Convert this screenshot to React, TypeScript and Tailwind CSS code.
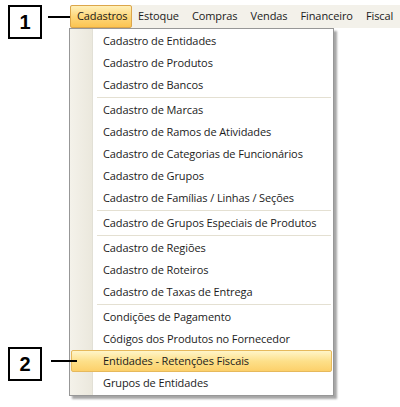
import type { ReactNode } from 'react';

type Entry = { label: string } | 'sep';

const MENU: Entry[] = [
  { label: 'Cadastro de Entidades' },
  { label: 'Cadastro de Produtos' },
  { label: 'Cadastro de Bancos' },
  'sep',
  { label: 'Cadastro de Marcas' },
  { label: 'Cadastro de Ramos de Atividades' },
  { label: 'Cadastro de Categorias de Funcionários' },
  { label: 'Cadastro de Grupos' },
  { label: 'Cadastro de Famílias / Linhas / Seções' },
  'sep',
  { label: 'Cadastro de Grupos Especiais de Produtos' },
  'sep',
  { label: 'Cadastro de Regiões' },
  { label: 'Cadastro de Roteiros' },
  { label: 'Cadastro de Taxas de Entrega' },
  'sep',
  { label: 'Condições de Pagamento' },
  { label: 'Códigos dos Produtos no Fornecedor' },
  { label: 'Entidades - Retenções Fiscais' },
  { label: 'Grupos de Entidades' },
];

const TOP = ['Cadastros', 'Estoque', 'Compras', 'Vendas', 'Financeiro', 'Fiscal'];

function Callout({ n, className, children }: { n: string; className: string; children?: ReactNode }) {
  return (
    <div className={`absolute flex items-center ${className}`}>
      <div className="w-[34px] h-[34px] border-2 border-black bg-white flex items-center justify-center text-[20px] font-bold text-black font-['Liberation_Sans',Arial,sans-serif]">
        {n}
      </div>
      {children}
    </div>
  );
}

export default function App() {
  return (
    <div className="relative w-[400px] h-[407px] bg-white overflow-hidden font-['Open_Sans','Noto_Sans',sans-serif] text-[11px] tracking-[-0.1px] whitespace-nowrap text-[#1b1b1b]">
      {/* menu bar */}
      <div className="ml-[70px] mt-[5px] h-[23px] bg-[#f3f1ea] flex items-stretch">
        {TOP.map((t, i) => (
          <div
            key={t}
            className={
              i === 0
                ? 'pl-[6px] pr-[3px] flex items-center border border-[#dca64a] rounded-[2px] bg-gradient-to-b from-[#fff0b8] via-[#fdd77a] to-[#fbc450]'
                : 'px-[6.5px] flex items-center'
            }
          >
            {t}
          </div>
        ))}
      </div>

      {/* dropdown */}
      <div className="absolute left-[69px] top-[28px] w-[265px] bg-white border border-[#979797] shadow-[3px_3px_2px_rgba(0,0,0,0.35)] py-[1px]">
        <div className="absolute left-0 top-0 bottom-0 w-[23px] bg-gradient-to-r from-[#f4f2ea] to-[#ebe8dd] border-r border-[#e2e0d6]" />
        <div className="absolute left-[24px] top-0 bottom-0 w-px bg-white" />
        <div className="relative flex flex-col">
          {MENU.map((e, i) =>
            e === 'sep' ? (
              <div key={i} className="h-[3px] flex items-center pl-[27px] pr-[2px]">
                <div className="h-px w-full bg-[#e4e0d2]" />
              </div>
            ) : e.label === 'Entidades - Retenções Fiscais' ? (
              <div
                key={i}
                className="h-[22px] mx-[1px] flex items-center pl-[31px] border border-[#e6b95c] rounded-[2px] bg-gradient-to-b from-[#fff5c8] via-[#fde08a] to-[#fcd06a]"
              >
                {e.label}
              </div>
            ) : (
              <div key={i} className="h-[22px] flex items-center pl-[33px]">
                {e.label}
              </div>
            ),
          )}
        </div>
      </div>

      {/* annotations */}
      <Callout n="1" className="left-[8px] top-[5px]">
        <div className="w-[22px] h-[2px] bg-black ml-[6px] -mt-[10px]" />
      </Callout>
      <Callout n="2" className="left-[8px] top-[347px]">
        <div className="w-[26px] h-[2px] bg-black ml-[9px] -mt-[6px]" />
      </Callout>
    </div>
  );
}
